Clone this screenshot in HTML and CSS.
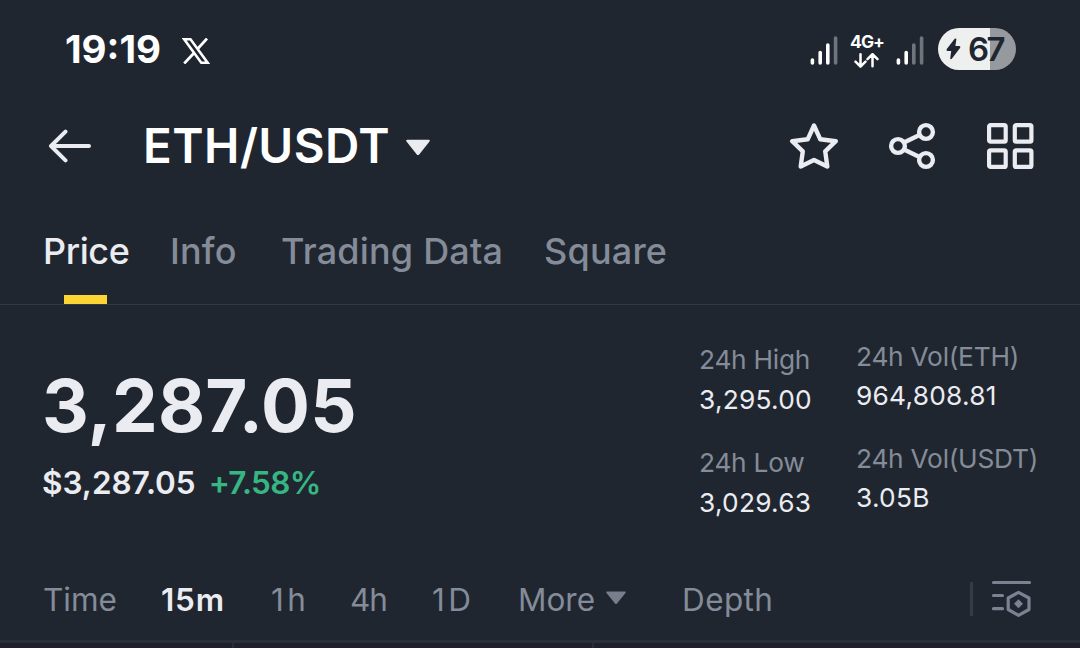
FILE: index.html
```html
<!DOCTYPE html>
<html lang="en">
<head>
<meta charset="utf-8">
<title>ETH/USDT</title>
<link rel="stylesheet" href="styles.css">
</head>
<body>
<div class="status">
  <span class="clock">19:19</span>
  <svg class="x-logo" width="28" height="26" viewBox="0 0 28 26" fill="none" stroke="#fff"><path d="M2.200 1.300H8.500L25.600 24.700H19.300Z" stroke-width="2.500"/><path d="M25 .5 15.500 11M12 15 2.200 25.500" stroke-width="2.700"/></svg>
  <svg class="signal" width="28" height="30" viewBox="0 0 28 30" stroke-width="3.600" stroke-linecap="round"><path d="M2.400 24v3M10.200 16.500V27M17.800 9v18" stroke="#fff"/><path d="M25.600 2v25" stroke="#70747d"/></svg>
  <div class="network">
    <span class="net-label">4G+</span>
    <svg width="26" height="15" viewBox="0 0 26 15" fill="none" stroke="#fff" stroke-width="2.500" stroke-linecap="round" stroke-linejoin="round"><path d="M6.500 1.300v12M1.500 8.600l5 5 5-5M18.500 13.300v-12M13.500 6.100l5-5 5 5"/></svg>
  </div>
  <svg class="signal second" width="28" height="30" viewBox="0 0 28 30" stroke-width="3.600" stroke-linecap="round"><path d="M2.400 24v3M10.200 16.500V27" stroke="#fff"/><path d="M17.800 9v18M25.600 2v25" stroke="#70747d"/></svg>
  <div class="battery">
    <svg width="15" height="22" viewBox="0 0 15 22" fill="#20262f"><path d="M8.700.7Q10.600-.2 10.300 1.800L9.400 8H13Q15 8.200 14 10L5.800 20.800Q4 22 4.300 19.800L5.200 13H1.800Q-.1 12.700.8 11Z"/></svg>
    <span>67</span>
  </div>
</div>

<header class="header">
  <svg width="44" height="34" viewBox="0 0 44 34" fill="none" stroke="#ebecf1" stroke-width="4" stroke-linecap="round" stroke-linejoin="round"><path d="M41 17H3M17.500 2.600 3 17 17.500 31.400"/></svg>
  <h1 class="pair">ETH/USDT</h1>
  <svg class="caret" width="24" height="17" viewBox="0 0 24 17" fill="#ebecf1"><path d="M1.300.7H22.700Q24.600 1 23.300 2.800L13.200 15.500Q12 16.700 10.800 15.500L.7 2.800Q-.6 1 1.300.7Z"/></svg>
  <div class="actions">
    <svg width="50" height="48" viewBox="0 0 50 48" fill="none" stroke="#ebecf1" stroke-width="4.400" stroke-linejoin="round"><path d="M26 3.500 32.300 17.300 47.800 19.200 37.200 29.300 39.300 44.500 26 38 12.700 44.500 14.800 29.300 4.200 19.200 19.700 17.300Z"/></svg>
    <svg width="48" height="48" viewBox="0 0 48 48" fill="none" stroke="#ebecf1" stroke-width="4.400"><circle cx="10" cy="24" r="6.900"/><circle cx="38" cy="10" r="6.900"/><circle cx="38" cy="38" r="6.900"/><path d="M16 20.500 32 12.800M16 27.500 32 35.200"/></svg>
    <svg width="48" height="48" viewBox="0 0 48 48" fill="none" stroke="#ebecf1" stroke-width="4.200"><rect x="3.100" y="3.100" width="16.600" height="16.600" rx="1.500"/><rect x="28.800" y="3.100" width="16.600" height="16.600" rx="1.500"/><rect x="3.100" y="28.300" width="16.600" height="16.600" rx="1.500"/><rect x="28.800" y="28.300" width="16.600" height="16.600" rx="1.500"/></svg>
  </div>
</header>

<nav class="tabs">
  <a class="tab active">Price</a>
  <a class="tab">Info</a>
  <a class="tab">Trading Data</a>
  <a class="tab">Square</a>
</nav>

<section class="ticker">
  <div class="quote">
    <div class="last">3,287.05</div>
    <div class="sub"><span>$3,287.05</span><span class="change">+7.58%</span></div>
  </div>
  <dl class="stats range">
    <dt>24h High</dt><dd>3,295.00</dd>
    <dt>24h Low</dt><dd>3,029.63</dd>
  </dl>
  <dl class="stats volume">
    <dt>24h Vol(ETH)</dt><dd>964,808.81</dd>
    <dt>24h Vol(USDT)</dt><dd>3.05B</dd>
  </dl>
</section>

<div class="frames">
  <span>Time</span>
  <span class="selected">15m</span>
  <span class="spaced">1h</span>
  <span class="tight">4h</span>
  <span class="spaced">1D</span>
  <span class="more">More<svg width="20" height="14" viewBox="0 0 20 14" fill="#777f8d"><path d="M1.200.5H18.800Q20.400.8 19.300 2.300L11 12.500Q10 13.500 9 12.500L.7 2.300Q-.4.8 1.200.5Z"/></svg></span>
  <span class="depth">Depth</span>
  <div class="settings">
    <svg width="42" height="40" viewBox="0 0 42 40" fill="none" stroke="#7b8291" stroke-width="3.200" stroke-linecap="round" stroke-linejoin="round"><path d="M2.500 3.500H38.500M2.500 16.500H11.500M2.500 29.700H11.500"/><path d="M27.500 13.400 38 19V30.500L27.500 36.300 17.200 30.500V19Z"/><path d="M27.500 20.300 32 24.800 27.500 29.300 23 24.800Z" fill="#7b8291" stroke="none"/></svg>
  </div>
</div>
<div class="chart"><i></i><i></i><i></i></div>
</body>
</html>
```
FILE: styles.css
```css
* { box-sizing: border-box; }
body {
  margin: 0;
  width: 1080px;
  height: 648px;
  overflow: hidden;
  background: #20262f;
  color: #ebecf1;
  font-family: Inter, Lato, sans-serif;
}
svg { display: block; flex: none; }

.status {
  display: flex;
  align-items: center;
  height: 98px;
  padding-left: 65px;
  color: #fff;
}
.clock {
  width: 117px;
  font-size: 38.500px;
  font-weight: 700;
  line-height: 48px;
}
.x-logo { margin-top: 3px; }
.signal { margin: 3px 0 0 600px; }
.network {
  display: flex;
  flex-direction: column;
  align-items: center;
  gap: 3px;
  width: 34px;
  margin: 3px 0 0 12px;
}
.net-label {
  font-size: 17.500px;
  font-weight: 700;
  line-height: 16px;
  letter-spacing: -1px;
}
.signal.second { margin-left: 12px; }
.battery {
  display: flex;
  align-items: center;
  width: 78px;
  height: 42px;
  margin-left: 14px;
  padding-left: 8px;
  border-radius: 21px;
  background: linear-gradient(90deg, #eef0f0 52px, #96999e 52px);
  color: #20262f;
}
.battery span {
  margin: -1px 0 0 7px;
  font-size: 33px;
  font-weight: 600;
  line-height: 42px;
  letter-spacing: -2.500px;
}

.header {
  display: flex;
  align-items: center;
  height: 96px;
  padding: 0 46px 0 48px;
}
.pair {
  width: 257px;
  margin: -1px 0 0 49px;
  padding-left: 2px;
  color: #fff;
  font-size: 47.500px;
  font-weight: 600;
  line-height: 60px;
  letter-spacing: 0.450px;
  white-space: nowrap;
}
.caret { margin: 3px 0 0 8px; }
.actions {
  display: flex;
  align-items: center;
  gap: 50px;
  margin-left: auto;
}

.tabs {
  display: grid;
  grid-template-columns: 127px 111px 263px auto;
  height: 111px;
  padding: 26px 0 0 43px;
  border-bottom: 1px solid #323943;
}
.tab {
  position: relative;
  color: #848c99;
  font-size: 36px;
  font-weight: 500;
  line-height: 62px;
  letter-spacing: 0.200px;
  white-space: nowrap;
}
.tab.active { color: #ebecf1; letter-spacing: -0.400px; }
.tab.active::after {
  content: "";
  position: absolute;
  left: 21px;
  bottom: 0;
  width: 43px;
  height: 9px;
  background: #fcd535;
}

.ticker {
  display: grid;
  grid-template-columns: 656px 157px auto;
  height: 247px;
  padding-left: 43px;
}
.quote { padding-top: 51px; }
.last {
  margin-left: -1px;
  font-size: 72.600px;
  font-weight: 700;
  line-height: 100px;
  letter-spacing: 0.200px;
}
.sub {
  display: flex;
  margin: 6px 0 0 -1px;
  font-size: 31.500px;
  font-weight: 600;
  line-height: 42px;
}
.change { margin-left: 13px; color: #36b683; letter-spacing: -0.650px; }
.stats { margin: 0; font-size: 26.300px; }
.range { padding-top: 35px; }
.volume { padding-top: 32px; }
.stats dt {
  height: 40px;
  color: #848c99;
  line-height: 40px;
  letter-spacing: -0.250px;
  white-space: nowrap;
}
.stats dd {
  height: 63px;
  margin: 0;
  line-height: 40px;
  letter-spacing: 0.250px;
}
.volume dt { line-height: 39px; }
.volume dd { height: 62px; line-height: 38px; }

.frames {
  display: grid;
  grid-template-columns: 118px 109px 80px 81px 86px 164px 289px auto;
  align-items: center;
  height: 88px;
  padding: 7px 0 0 43px;
  color: #848c99;
  font-size: 31.500px;
  line-height: 44px;
}
.selected { color: #ebecf1; font-weight: 600; letter-spacing: 0.800px; }
.spaced { padding-left: 1px; letter-spacing: 3.500px; }
.tight { letter-spacing: -1px; }
.more { display: flex; align-items: center; gap: 11px; padding-left: 1px; }
.more svg { margin-top: -3px; }
.depth { padding-left: 1px; letter-spacing: 0.400px; }
.settings {
  display: flex;
  align-items: center;
  width: 100px;
  height: 34px;
  margin-top: -2px;
  padding-left: 18px;
  border-left: 3px solid #353c48;
}
.chart {
  display: grid;
  grid-template-columns: 232px 358px auto;
  gap: 2px;
  height: 8px;
  border-top: 3px solid #2a303b;
  background: #292d37;
}
.chart i { background: #20202b; }
```
